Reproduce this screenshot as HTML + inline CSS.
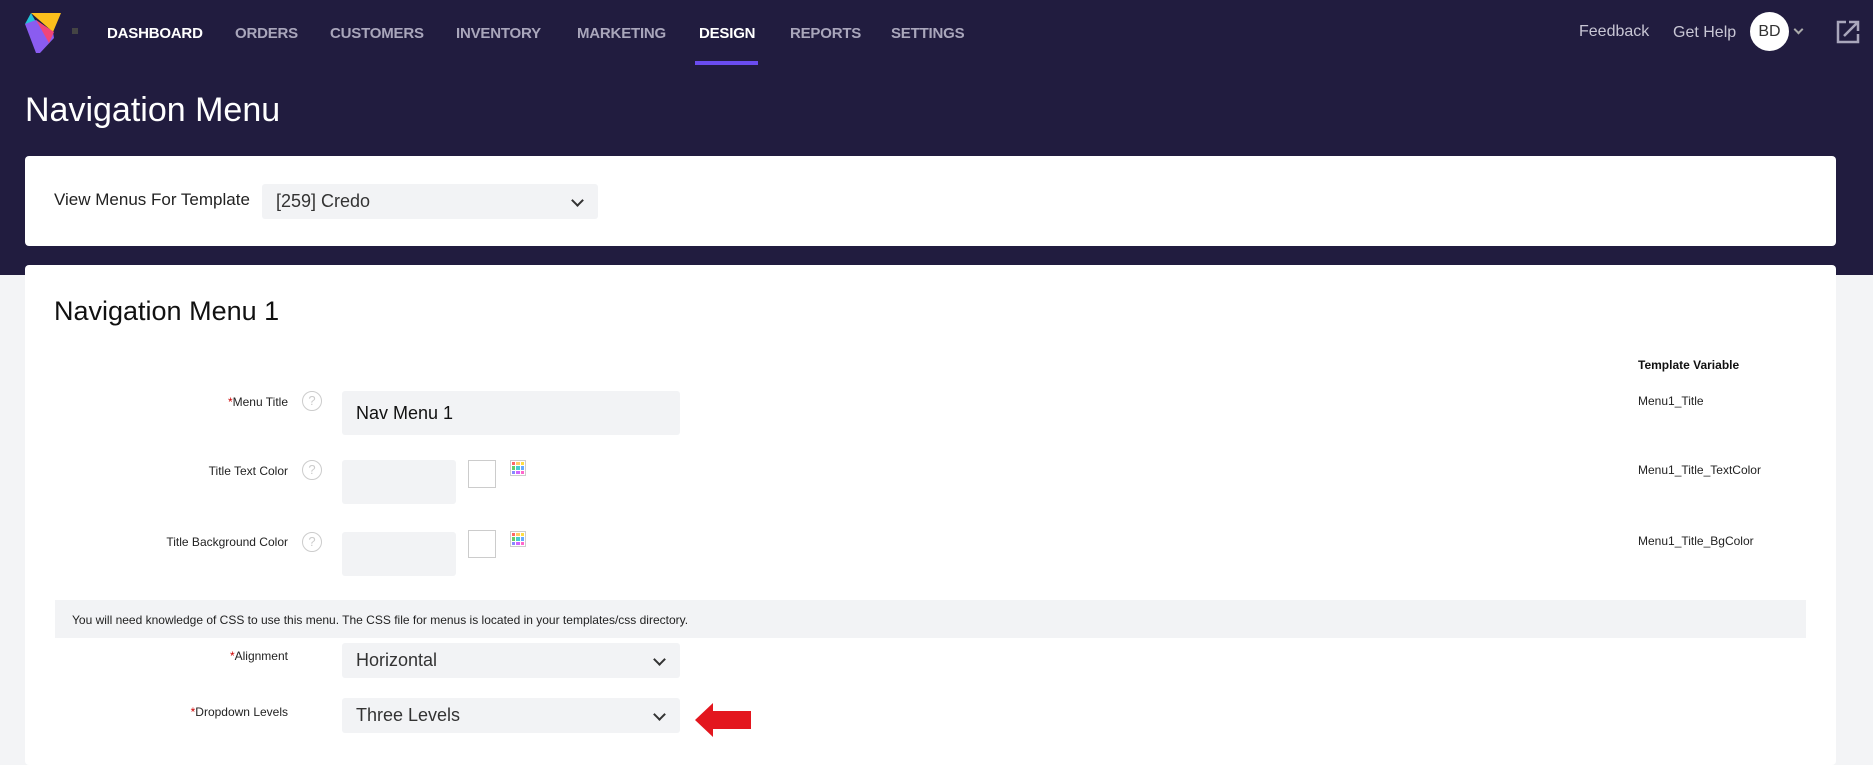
<!DOCTYPE html>
<html><head><meta charset="utf-8"><style>
*{margin:0;padding:0;box-sizing:border-box}
body{width:1873px;height:755px;overflow:hidden;background:#f3f4f6;font-family:"Liberation Sans",Arial,sans-serif;position:relative}
.top{position:absolute;left:0;top:0;width:1873px;height:275px;background:#211c3f}
.a{position:absolute;white-space:nowrap}
.nav{top:25px;font-size:15px;font-weight:bold;color:#a9a6bb;letter-spacing:-0.2px}
.card{position:absolute;background:#fff;border-radius:4px}
.lbl{font-size:12px;color:#222;text-align:right;width:260px}
.lbl b{color:#c00;font-weight:normal}
.inp{position:absolute;background:#f2f3f5;border-radius:3px}
.help{position:absolute;width:20px;height:20px;border:1.5px solid #ccc;border-radius:50%;color:#ccc;font-size:13px;text-align:center;line-height:17px}
.sw{position:absolute;width:28px;height:28px;border:1px solid #ccc;background:#fff}
.pal{position:absolute;width:16px;height:16px;display:grid;grid-template-columns:repeat(3,1fr);gap:1px;border:1px solid #ccc;padding:1px;background:#fff}
.sel{font-size:18px;color:#333;line-height:34px;padding-left:14px}
.chev{position:absolute;right:16px;top:12px;width:9px;height:9px;border-right:2px solid #333;border-bottom:2px solid #333;transform:rotate(45deg)}
.tv{font-size:12px;color:#222}
</style></head><body>
<div class="top"></div>
<svg class="a" style="left:24px;top:12px" width="40" height="42" viewBox="0 0 40 42">
<path d="M7 1H37L29 20Z" fill="#fbbf1c"/>
<path d="M7 1L1 12L12 10Z" fill="#22c4d8"/>
<path d="M1 12L12 8L29 20L30 26L16 41L12 41Z" fill="#8a5cf0"/>
<path d="M12 8L30 20L25 31Z" fill="#f0457a"/>
</svg>
<div class="a" style="left:72px;top:28px;width:6px;height:6px;background:#444"></div>
<div class="a nav" style="left:107px;color:#fff">DASHBOARD</div>
<div class="a nav" style="left:235px">ORDERS</div>
<div class="a nav" style="left:330px">CUSTOMERS</div>
<div class="a nav" style="left:456px">INVENTORY</div>
<div class="a nav" style="left:577px">MARKETING</div>
<div class="a nav" style="left:699px;color:#fff">DESIGN</div>
<div class="a nav" style="left:790px">REPORTS</div>
<div class="a nav" style="left:891px">SETTINGS</div>
<div class="a" style="left:695px;top:61px;width:63px;height:4px;background:#6a4cf0"></div>
<div class="a" style="left:1579px;top:23px;font-size:16px;color:#c8c6d4">Feedback</div>
<div class="a" style="left:1673px;top:24px;font-size:16px;color:#c8c6d4">Get Help</div>
<div class="a" style="left:1750px;top:12px;width:39px;height:39px;border-radius:50%;background:#fff;color:#333;font-size:16px;text-align:center;line-height:39px">BD</div>
<div class="a" style="left:1795px;top:26px;width:7px;height:7px;border-right:2px solid #aaa;border-bottom:2px solid #aaa;transform:rotate(45deg)"></div>
<svg class="a" style="left:1836px;top:20px" width="24" height="24" viewBox="0 0 24 24" fill="none" stroke="#a9a6bb" stroke-width="2.5"><path d="M10 2H2V22H22V14"/><path d="M8 16L21 3M13 2H22V11"/></svg>
<div class="a" style="left:25px;top:91px;font-size:34px;color:#fff">Navigation Menu</div>
<div class="card" style="left:25px;top:156px;width:1811px;height:90px"></div>
<div class="a" style="left:54px;top:190px;font-size:17px;color:#222">View Menus For Template</div>
<div class="inp" style="left:262px;top:184px;width:336px;height:35px"><div class="sel">[259] Credo</div><div class="chev"></div></div>
<div class="card" style="left:25px;top:265px;width:1811px;height:500px"></div>
<div class="a" style="left:54px;top:296px;font-size:27px;color:#111">Navigation Menu 1</div>
<div class="a" style="left:1638px;top:358px;font-size:12px;font-weight:bold;color:#111">Template Variable</div>

<div class="a lbl" style="left:28px;top:395px"><b>*</b>Menu Title</div>
<div class="help" style="left:302px;top:391px">?</div>
<div class="inp" style="left:342px;top:391px;width:338px;height:44px"><div style="font-size:18px;color:#111;padding:12px 14px">Nav Menu 1</div></div>
<div class="a tv" style="left:1638px;top:394px">Menu1_Title</div>

<div class="a lbl" style="left:28px;top:464px">Title Text Color</div>
<div class="help" style="left:302px;top:460px">?</div>
<div class="inp" style="left:342px;top:460px;width:114px;height:44px"></div>
<div class="sw" style="left:468px;top:460px"></div>
<div class="pal" style="left:510px;top:460px"><i style="background:#f66"></i><i style="background:#fc6"></i><i style="background:#fd4"></i><i style="background:#6c6"></i><i style="background:#4cc"></i><i style="background:#6af"></i><i style="background:#88f"></i><i style="background:#c6f"></i><i style="background:#f6c"></i></div>
<div class="a tv" style="left:1638px;top:463px">Menu1_Title_TextColor</div>

<div class="a lbl" style="left:28px;top:535px">Title Background Color</div>
<div class="help" style="left:302px;top:532px">?</div>
<div class="inp" style="left:342px;top:532px;width:114px;height:44px"></div>
<div class="sw" style="left:468px;top:530px"></div>
<div class="pal" style="left:510px;top:531px"><i style="background:#f66"></i><i style="background:#fc6"></i><i style="background:#fd4"></i><i style="background:#6c6"></i><i style="background:#4cc"></i><i style="background:#6af"></i><i style="background:#88f"></i><i style="background:#c6f"></i><i style="background:#f6c"></i></div>
<div class="a tv" style="left:1638px;top:534px">Menu1_Title_BgColor</div>

<div class="a" style="left:55px;top:600px;width:1751px;height:38px;background:#f2f3f5"></div>
<div class="a" style="left:72px;top:613px;font-size:12px;color:#222">You will need knowledge of CSS to use this menu. The CSS file for menus is located in your templates/css directory.</div>

<div class="a lbl" style="left:28px;top:649px"><b>*</b>Alignment</div>
<div class="inp" style="left:342px;top:643px;width:338px;height:35px"><div class="sel">Horizontal</div><div class="chev"></div></div>
<div class="a lbl" style="left:28px;top:705px"><b>*</b>Dropdown Levels</div>
<div class="inp" style="left:342px;top:698px;width:338px;height:35px"><div class="sel">Three Levels</div><div class="chev"></div></div>
<svg class="a" style="left:694px;top:702px" width="58" height="36" viewBox="0 0 58 36"><path d="M1 18L19 1V9H57V27H19V35Z" fill="#e3161e"/></svg>
</body></html>
